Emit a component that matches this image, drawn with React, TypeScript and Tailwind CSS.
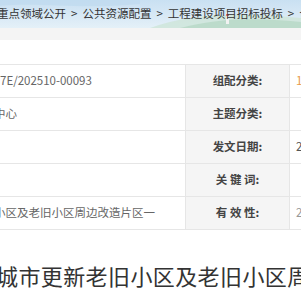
const rows = [
  { left: "7E/202510-00093", leftShift: "ml-0", label: "组配分类:", value: "1", valueClass: "text-[#e89a4c]" },
  { left: "交易中心", leftShift: "ml-[-29px]", label: "主题分类:", value: "", valueClass: "" },
  { left: "", leftShift: "ml-0", label: "发文日期:", value: "2", valueClass: "text-[#555]" },
  { left: "", leftShift: "ml-0", label: "关 键 词:", value: "", valueClass: "" },
  { left: "小区及老旧小区周边改造片区一", leftShift: "ml-[-6px]", label: "有 效 性:", value: "2", valueClass: "text-[#999]" },
];

const Header = () => (
  <div className="relative h-[28px] overflow-hidden bg-gradient-to-b from-[#c9e0f2] to-[#e4f0f8]">
    <svg className="absolute inset-0" width="301" height="28" viewBox="0 0 301 28">
      <path d="M150 28 C 190 14, 230 12, 301 18 L301 28 Z" fill="#cfe6dc" opacity="0.9" />
      <path d="M180 28 C 215 19, 250 17, 301 22 L301 28 Z" fill="#b7d8c6" opacity="0.8" />
      <rect x="226" y="12" width="3" height="12" fill="#f2f2f2" />
      <rect x="226" y="14" width="3" height="2" fill="#e07a7a" />
      <path d="M0 6 C 40 2, 80 10, 140 4 L140 0 L0 0 Z" fill="#bcd8ee" opacity="0.6" />
    </svg>
    <div className="relative flex items-center h-full ml-[-3px] text-[11.5px] leading-none text-[#333] whitespace-nowrap">
      <span>重点领域公开</span>
      <span className="mx-[5px]">&gt;</span>
      <span>公共资源配置</span>
      <span className="mx-[5px]">&gt;</span>
      <span>工程建设项目招标投标</span>
      <span className="mx-[5px]">&gt;</span>
      <span>合同履约</span>
    </div>
  </div>
);

export default function App() {
  return (
    <div
      className="w-[301px] h-[300px] overflow-hidden bg-white"
      style={{ fontFamily: '"Microsoft YaHei", "Noto Sans CJK SC", sans-serif' }}
    >
      <Header />
      <div className="h-[12px] bg-[#f4f4f4]" />
      <div className="mt-[24px] border-t border-[#e6e6e6]">
        {rows.map((r) => (
          <div key={r.label} className="grid grid-cols-[185px_105px_1fr] h-[33px] border-b border-[#e6e6e6]">
            <div className="flex items-center overflow-hidden whitespace-nowrap text-[11.5px] text-[#666]">
              <span className={r.leftShift}>{r.left}</span>
            </div>
            <div className="flex items-center justify-center bg-[#f5f5f5] border-l border-r border-[#e6e6e6] text-[11.5px] font-bold text-[#444] whitespace-nowrap">
              {r.label}
            </div>
            <div className={`flex items-center pl-[6px] text-[11.5px] whitespace-nowrap ${r.valueClass}`}>
              {r.value}
            </div>
          </div>
        ))}
      </div>
      <div className="mt-[34px] ml-[-4px] whitespace-nowrap text-[22px] tracking-[0.4px] leading-none text-[#333]">
        城市更新老旧小区及老旧小区周边改造片区一期
      </div>
    </div>
  );
}
